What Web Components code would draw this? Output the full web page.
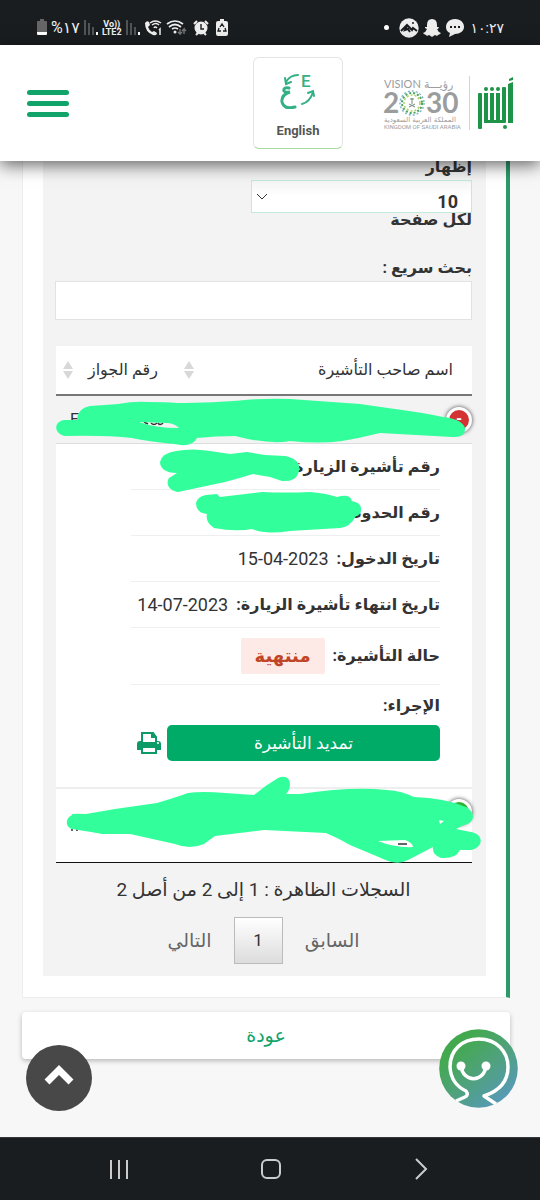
<!DOCTYPE html>
<html lang="ar" dir="rtl">
<head>
<meta charset="utf-8">
<meta name="viewport" content="width=device-width, initial-scale=1">
<title>أبشر</title>
<style>
  body {
    margin: 0;
    background: #f7f7f7;
    color: #333;
    font-family: Roboto, "DejaVu Sans", sans-serif;
    font-size: 18px;
  }
</style>
</head>
<body>
<absher-app>
  <status-bar slot="top"></status-bar>
  <site-header slot="top"></site-header>
  <content-card>
    <table-length></table-length>
    <quick-search></quick-search>
    <visa-table>
      <visa-field label="رقم تأشيرة الزيارة"></visa-field>
      <visa-field label="رقم الحدود"></visa-field>
      <visa-field label="تاريخ الدخول:">15-04-2023</visa-field>
      <visa-field label="تاريخ انتهاء تأشيرة الزيارة:">14-07-2023</visa-field>
      <visa-field label="حالة التأشيرة:" tall><status-badge>منتهية</status-badge></visa-field>
      <visa-actions></visa-actions>
    </visa-table>
    <table-pager>السجلات الظاهرة : 1 إلى 2 من أصل 2</table-pager>
  </content-card>
  <back-button>عودة</back-button>
  <floating-tools slot="floating"></floating-tools>
  <nav-bar slot="bottom"></nav-bar>
</absher-app>

<script>
class AbsherApp extends HTMLElement {
  constructor() {
    super();
    this.attachShadow({ mode: 'open' });
    this.shadowRoot.innerHTML = `
      <style>
        :host {
          display: flex;
          flex-direction: column;
          position: relative;
          min-height: 100vh;
        }
        main {
          flex: 1;
          padding: 0 30px 24px 22px;
        }
      </style>
      <slot name="top"></slot>
      <main><slot></slot></main>
      <slot name="floating"></slot>
      <slot name="bottom"></slot>
    `;
  }
}

class StatusBar extends HTMLElement {
  constructor() {
    super();
    this.attachShadow({ mode: 'open' });
    this.shadowRoot.innerHTML = `
      <style>
        :host {
          display: flex;
          direction: ltr;
          align-items: center;
          justify-content: space-between;
          box-sizing: border-box;
          height: 45px;
          padding: 10px 36px 0 37px;
          background: #1a1d20;
          color: #eee;
          font-size: 16px;
          line-height: 20px;
        }
        div {
          display: flex;
          align-items: center;
          gap: 4px;
        }
        .lte {
          font-size: 9px;
          line-height: 8px;
          font-weight: bold;
          text-align: center;
        }
        .time {
          margin-left: 2px;
          font-size: 14px;
        }
        svg { display: block; }
      </style>
      <div>
        <svg width="10" height="17" viewBox="0 0 10 17"><path fill="#666" d="M3 0h4v2h2q1 0 1 1v11H0V3q0-1 1-1h2z"/><path fill="#fff" d="M0 13h10v2q0 1-1 1H1q-1 0-1-1z"/></svg>
        <span>%١٧</span>
        <svg width="14" height="15" viewBox="0 0 14 15"><path stroke="#666" stroke-width="1.5" d="M1 0v15M5 3v12M9 7v8"/><path stroke="#fff" stroke-width="2" d="M13 12v3"/></svg>
        <span class="lte">Vo))<br>LTE2</span>
        <svg width="14" height="15" viewBox="0 0 14 15"><path stroke="#666" stroke-width="1.5" d="M1 0v15M5 3v12M9 7v8"/><path stroke="#fff" stroke-width="2" d="M13 12v3"/></svg>
        <svg width="18" height="16" viewBox="0 0 18 16" fill="none"><path fill="#eee" d="M1 3q2-3 4-1l1 3-2 2q1 3 4 5l2-1 3 2q0 3-4 2Q1 12 1 3z"/><path stroke="#eee" stroke-width="1.5" d="M6 3q5-4 11 0M8 5q4-3 7 0M10 8q1-2 3 0"/><path stroke="#eee" stroke-width="1.5" d="M15 10l1-1v6"/></svg>
        <svg width="21" height="15" viewBox="0 0 21 15" fill="none"><path stroke="#eee" stroke-width="1.7" d="M1 4q8-6 16 0M3 7q6-5 12 0M6 9q3-2 6 0"/><circle cx="9" cy="12" r="1.5" fill="#eee"/><path stroke="#777" stroke-width="1.4" d="M14 9v5l-2-2m2 2l2-2M18 14V9l-2 2m2-2l2 2"/></svg>
        <svg width="20" height="16" viewBox="-2 0 20 16"><circle cx="8" cy="8" r="6.5" fill="#eee"/><path stroke="#eee" stroke-width="2" d="M1 4l3-3M15 4l-3-3M3 15l2-2M13 15l-2-2"/><path fill="none" stroke="#1a1d20" stroke-width="1.4" d="M8 4v5h3"/></svg>
        <svg width="14" height="17" viewBox="2 0 14 17"><path fill="#eee" d="M7 0h4v2h2q2 0 2 2v11q0 2-2 2H5q-2 0-2-2V4q0-2 2-2h2z"/><path fill="none" stroke="#1a1d20" stroke-width="1.3" d="M7 8l2-3 2 3M12 9l1 3h-3M8 12H5l1-3"/></svg>
      </div>
      <div>
        <svg width="5" height="5" viewBox="0 0 5 5"><circle cx="2.500" cy="2.500" r="2.500" fill="#fff"/></svg>
        <svg width="26" height="20" viewBox="0 0 26 20"><circle cx="16" cy="10" r="9.700" fill="#eee"/><path fill="none" stroke="#1a1d20" stroke-width="2" d="M8 13l6-6 5 5 1-2 4 3M14 8l-2 4 3-1 2 3"/><circle cx="20" cy="5" r="1" fill="#1a1d20"/></svg>
        <svg width="18" height="18" viewBox="0 0 18 18"><path fill="#eee" d="M9 0q5 0 5 6v2l2 0-1 2-1 0q1 3 4 4l-1 1-2 1-1 1-2-1-3 2-3-2-2 1-1-1-2-1-1-1q3-1 4-4l-2-1 0-1 2 0V6q0-6 5-6z"/></svg>
        <svg width="20" height="18" viewBox="0 0 20 18"><path fill="#eee" d="M10 0c6 0 9 4 9 8s-4 7-9 7l-6 3 1-4C2 13 1 10 1 8c0-4 3-8 9-8z"/><path stroke="#1a1d20" stroke-width="2.200" stroke-dasharray="2 2" d="M5 8h10"/></svg>
        <span class="time">١٠:٢٧</span>
      </div>
    `;
  }
}

class SiteHeader extends HTMLElement {
  constructor() {
    super();
    this.attachShadow({ mode: 'open' });
    this.shadowRoot.innerHTML = `
      <style>
        :host {
          display: flex;
          align-items: center;
          position: relative;
          z-index: 2;
          box-sizing: border-box;
          height: 116px;
          padding: 0 26px 0 27px;
          background: #fff;
          box-shadow: 0 4px 16px rgba(0,0,0, 0.6);
        }
        button {
          border: 0;
          padding: 0;
          background: none;
          font: inherit;
          cursor: pointer;
        }
        svg { display: block; }
        .logo { padding-left: 8px; border-left: 1px solid #cfd8cf; }
        .vision { margin-right: 9px; overflow: visible; }
        .lang {
          display: flex;
          flex-direction: column;
          align-items: center;
          justify-content: space-between;
          box-sizing: border-box;
          width: 90px;
          height: 92px;
          margin-right: 41px;
          padding: 15px 0 9px;
          border: 1px solid #e4e4e4;
          border-bottom-color: #a8dba0;
          border-radius: 6px;
          color: #555;
          font-size: 13px;
          line-height: 16px;
          font-weight: bold;
        }
        .menu {
          display: flex;
          flex-direction: column;
          gap: 6px;
          width: 42px;
          margin-right: auto;
        }
        .menu i {
          height: 5px;
          border-radius: 3px;
          background: #10a36a;
        }
      </style>
      <svg class="logo" width="36" height="54" viewBox="478 76 36 54" role="img" aria-label="أبشر">
        <g fill="#1d9448">
          <rect x="478" y="93" width="4" height="36" rx="1"/>
          <rect x="484" y="93" width="4" height="29"/>
          <rect x="490" y="93" width="4" height="29"/>
          <rect x="496" y="93" width="4" height="29"/>
          <rect x="502" y="87" width="4" height="36" rx="1"/>
          <path d="M508 84l5-2v41h-5zM509 79l4-2v3l-4 1z"/>
          <path d="M484 120h20v3h-20z"/>
          <circle cx="486" cy="89" r="2"/><circle cx="492" cy="89" r="2"/><circle cx="498" cy="89" r="2"/><circle cx="505" cy="127" r="2"/>
        </g>
      </svg>
      <svg class="vision" width="76" height="54" viewBox="0 0 76 54" direction="ltr" fill="#9a9c9e">
        <text x="0" y="12" font-size="11" font-family="Lato, sans-serif">VISION</text>
        <text x="40" y="12" font-size="11" font-family="DejaVu Sans, sans-serif">رؤيـــة</text>
        <text x="-1" y="37" font-size="28" font-weight="bold" font-family="Lato, sans-serif">2</text>
        <text x="42" y="37" font-size="28" font-weight="bold" font-family="Lato, sans-serif">30</text>
        <g fill="none" stroke-dasharray="2 2">
          <circle cx="28" cy="27" r="12" stroke="#7db9c9" stroke-width="1.5"/>
          <circle cx="28" cy="27" r="10" stroke="#4ba35c" stroke-width="2"/>
          <circle cx="28" cy="27" r="8" stroke="#a9cf62" stroke-width="1.5"/>
        </g>
        <path fill="none" stroke="#6d8a76" d="M28 22v6M26 23h4M25 31l6-3M31 31l-6-3"/>
        <text x="0" y="46" font-size="7" font-family="DejaVu Sans, sans-serif">المملكة العربية السعودية</text>
        <text x="0" y="53" font-size="6" font-family="Roboto, sans-serif">KINGDOM OF SAUDI ARABIA</text>
      </svg>
      <button class="lang">
        <svg width="36" height="36" viewBox="0 0 36 36" fill="none" stroke="#35b085" stroke-width="2" stroke-linecap="round">
          <path d="M18 2Q10 2 6 9M5 5l1 6 5-2"/>
          <path stroke-width="3" d="M9 15Q3 14 4 18q1 2 6 1Q1 22 2 29q2 8 13 5"/>
          <path d="M22 31q8-2 11-12M28 20l5-2 1 5"/>
          <text x="21" y="14" font-size="17" font-weight="500" fill="#35b085" stroke="none" direction="ltr" font-family="Roboto, sans-serif">E</text>
        </svg>
        English
      </button>
      <button class="menu" aria-label="القائمة"><i></i><i></i><i></i></button>
    `;
  }
}

class ContentCard extends HTMLElement {
  constructor() {
    super();
    this.attachShadow({ mode: 'open' });
    this.shadowRoot.innerHTML = `
      <style>
        :host {
          display: block;
          margin-top: -8px;
          padding: 0 20px 21px 20px;
          border: 1px solid #ededed;
          border-right: 4px solid #2a9a68;
          background: #fff;
        }
        section {
          padding: 0 14px 12px 12px;
          background: #f3f3f3;
        }
      </style>
      <section><slot></slot></section>
    `;
  }
}

class TableLength extends HTMLElement {
  constructor() {
    super();
    this.attachShadow({ mode: 'open' });
    this.shadowRoot.innerHTML = `
      <style>
        :host {
          display: block;
          font-weight: bold;
        }
        label {
          display: flex;
          flex-direction: column;
          align-items: flex-start;
          font-size: 16px;
          line-height: 14px;
        }
        .top { line-height: 26px; }
        .select {
          display: grid;
          align-items: center;
          width: 53%;
        }
        select, svg { grid-area: 1 / 1; }
        select {
          appearance: none;
          box-sizing: border-box;
          width: 100%;
          height: 33px;
          padding: 10px 13px 0;
          border: 1px solid #c4eadb;
          border-radius: 0;
          background: linear-gradient(#f5f5f5, #fff 50%);
          color: #333;
          font: inherit;
          font-size: 18px;
          line-height: 22px;
        }
        svg { justify-self: end; margin-left: 5px; }
      </style>
      <label>
        <span class="top">إظهار</span>
        <span class="select">
          <select><option>10</option><option>25</option><option>50</option></select>
          <svg width="12" height="8" viewBox="0 0 12 8" fill="none" stroke="#333"><path d="M1 1l5 5 5-5"/></svg>
        </span>
        <span>لكل صفحة</span>
      </label>
    `;
  }
}

class QuickSearch extends HTMLElement {
  constructor() {
    super();
    this.attachShadow({ mode: 'open' });
    this.shadowRoot.innerHTML = `
      <style>
        :host {
          display: block;
          margin: 28px 0 26px;
        }
        label {
          display: block;
          font-size: 16px;
          line-height: 26px;
          font-weight: bold;
        }
        input {
          display: block;
          box-sizing: border-box;
          width: 100%;
          height: 39px;
          padding: 0 8px;
          border: 1px solid #e2e2e2;
          border-radius: 0;
          background: #fff;
          font: inherit;
        }
      </style>
      <label for="q">بحث سريع :</label>
      <input id="q" type="search">
    `;
  }
}

class VisaTable extends HTMLElement {
  constructor() {
    super();
    this.attachShadow({ mode: 'open' });
    this.shadowRoot.innerHTML = `
      <style>
        :host {
          display: block;
          position: relative;
          margin-left: 1px;
        }
        table {
          width: 100%;
          border-collapse: separate;
          border-spacing: 0;
          border-bottom: 1px solid #111;
          background: #fff;
          table-layout: fixed;
        }
        th, td { padding: 0; }
        th {
          height: 48px;
          border-bottom: 2px solid #777;
          font-size: 16px;
          line-height: 24px;
          font-weight: 500;
          text-align: start;
        }
        th div {
          display: flex;
          align-items: center;
          justify-content: space-between;
          padding: 0 19px 0 7px;
        }
        .passport { width: 121px; }
        .row td {
          height: 47px;
          border-bottom: 1px solid #ddd;
          background: #f3f3f3;
        }
        .row .number {
          padding-left: 14px;
          direction: ltr;
          text-align: left;
          line-height: 22px;
          font-size: 16px;
        }
        .last td {
          height: 73px;
          padding-top: 10px;
          box-sizing: border-box;
          vertical-align: top;
        }
        .details td { border-bottom: 2px solid #eee; }
        dl {
          margin: 0;
          padding: 0 32px 26px 75px;
        }
        .toggle {
          display: block;
          width: 26px;
          height: 26px;
          padding: 0;
          border: 3px solid #fff;
          border-radius: 50%;
          box-shadow: 0 0 4px #444;
          background: #d33333;
          color: #fff;
          font: bold 15px/18px "Liberation Mono", monospace;
        }
        .last .toggle { background: #31b131; color: #31b131; }
        .ink {
          display: block;
          position: absolute;
          top: 0;
          left: 0;
          width: 100%;
          overflow: visible;
          pointer-events: none;
        }
      </style>
      <table>
        <thead>
          <tr>
            <th><div>اسم صاحب التأشيرة ${VisaTable.sortIcon}</div></th>
            <th class="passport"><div>رقم الجواز ${VisaTable.sortIcon}</div></th>
          </tr>
        </thead>
        <tbody>
          <tr class="row"><td><button class="toggle">-</button></td><td class="number">E</td></tr>
          <tr class="details"><td colspan="2"><dl><slot></slot></dl></td></tr>
          <tr class="last"><td><button class="toggle" aria-label="عرض التفاصيل"></button></td><td></td></tr>
        </tbody>
      </table>
      <svg class="ink" viewBox="56 345 416 518">
        <path fill="none" stroke="#333" stroke-width="1.5" d="M144 421l4 2M151 422q3 3 6 0M158 422q2 3 5 0M71 829h2M76 829h2M84 829h6M398 843h9"/>
        <g fill="#32ff9b">
          <path d="M64 419h13Q78 407 90 405 105 404 118 403 135 400 148 401 165 401 177 402C200 402 225 401 245 399Q270 397 290 398L360 403 395 408Q425 412 443 416 462 418 465 427 466 437 452 436L380 432Q360 437 342 440 320 443 290 440 270 444 235 435 215 435 197 437 192 447 174 443 145 440 132 437 105 434 65 435C54 433 53 421 64 419z M139 421Q155 427 179 427 174 422 166 422z" fill-rule="evenodd"/>
          <path d="M176 450Q192 447 210 450L230 453 247 451 265 454 285 455C296 457 302 463 298 473Q295 481 282 480L270 476 253 473Q240 477 225 481L178 491C170 490 165 484 169 477L177 472C165 472 160 467 160 461Q162 452 176 450z"/>
          <path d="M206 494L217 493 220 496 262 491Q285 492 310 491 325 492 337 496 350 492 352 500 362 502 361 509 361 514 356 515 350 526 340 527L290 530Q265 534 252 528 235 531 214 527 205 521 207 513 196 512 196 502 198 495 206 494z"/>
          <path d="M72 814Q70 812 86 813L115 808 157 802Q177 796 188 792 202 790 225 792L254 794Q266 784 278 777 289 773 290 783 290 789 286 793L300 793Q352 785 387 789 402 790 414 796 445 797 466 806C477 812 474 823 464 824L456 828 471 831C486 834 482 848 470 849L460 849Q456 858 441 857 432 854 433 846L408 859Q399 864 388 860L350 844Q338 837 326 832L264 829 215 835 204 843Q190 849 175 843L130 833 112 833 102 833 91 831 72 828C65 826 65 817 72 814z M378 840Q395 847 413 846 413 842 405 839z M439 819l1 4 4-3z" fill-rule="evenodd"/>
        </g>
      </svg>
    `;
  }

  static get sortIcon() {
    return '<svg width="10" height="20" viewBox="0 0 10 20" fill="#d8d8d8"><path d="M0 9l5-8 5 8zM0 11l5 8 5-8z"/></svg>';
  }
}

class VisaField extends HTMLElement {
  constructor() {
    super();
    this.attachShadow({ mode: 'open' });
    this.shadowRoot.innerHTML = `
      <style>
        :host {
          display: flex;
          align-items: center;
          gap: 8px;
          height: 45px;
          border-bottom: 1px solid #eef0f0;
          line-height: 26px;
          white-space: nowrap;
        }
        :host([tall]) { height: 56px; }
        dt {
          font-size: 16px;
          font-weight: bold;
        }
        dd { margin: 0; }
      </style>
      <dt></dt>
      <dd><slot></slot></dd>
    `;
    this.shadowRoot.querySelector('dt').textContent = this.getAttribute('label');
  }
}

class StatusBadge extends HTMLElement {
  constructor() {
    super();
    this.attachShadow({ mode: 'open' });
    this.shadowRoot.innerHTML = `
      <style>
        :host {
          display: block;
          padding: 5px 14px;
          border-radius: 2px;
          background: #fdeae7;
          color: #bf4526;
          font-size: 18px;
          font-weight: bold;
        }
      </style>
      <slot></slot>
    `;
  }
}

class VisaActions extends HTMLElement {
  constructor() {
    super();
    this.attachShadow({ mode: 'open' });
    this.shadowRoot.innerHTML = `
      <style>
        :host {
          display: block;
          padding-top: 8px;
        }
        dt {
          font-size: 16px;
          line-height: 26px;
          font-weight: bold;
        }
        dd {
          display: flex;
          align-items: center;
          gap: 6px;
          margin: 6px 0 0;
        }
        button {
          padding: 0;
          border: 0;
          background: none;
          font: inherit;
          cursor: pointer;
        }
        .extend {
          flex: 1;
          height: 36px;
          border-radius: 5px;
          background: #00ab67;
          color: #fff;
          font-size: 17px;
          line-height: 26px;
        }
        svg { display: block; margin-left: 6px; }
      </style>
      <dt>الإجراء:</dt>
      <dd>
        <button class="extend">تمديد التأشيرة</button>
        <button aria-label="طباعة">
          <svg width="24" height="24" viewBox="0 0 24 24">
            <path fill="#0c9a66" d="M0 13q0-3 3-3h18q3 0 3 3v6h-4v-3H4v3H0z"/>
            <path fill="#fff" stroke="#0c9a66" stroke-width="2" d="M5 11V2h11l3 4v5M5 16h14v6H5z"/>
            <path fill="#0c9a66" d="M14 1l6 5-1 1h-5z"/>
            <circle cx="21" cy="12" r="1" fill="#fff"/>
          </svg>
        </button>
      </dd>
    `;
  }
}

class TablePager extends HTMLElement {
  constructor() {
    super();
    this.attachShadow({ mode: 'open' });
    this.shadowRoot.innerHTML = `
      <style>
        :host {
          display: block;
          text-align: center;
        }
        p {
          margin: 0;
          padding: 13px 0 14px;
          font-size: 19px;
          line-height: 27px;
        }
        nav {
          display: flex;
          align-items: center;
          justify-content: center;
        }
        button {
          height: 47px;
          padding: 0 22px;
          border: 0;
          background: none;
          color: #666;
          font: inherit;
          font-size: 19px;
          line-height: 27px;
        }
        .current {
          width: 49px;
          padding: 0;
          border: 1px solid #bbb;
          background: linear-gradient(#fff, #dcdcdc);
          color: #333;
          font-size: 17px;
        }
      </style>
      <p><slot></slot></p>
      <nav>
        <button>السابق</button>
        <button class="current">1</button>
        <button>التالي</button>
      </nav>
    `;
  }
}

class BackButton extends HTMLElement {
  constructor() {
    super();
    this.attachShadow({ mode: 'open' });
    this.shadowRoot.innerHTML = `
      <style>
        :host {
          display: block;
          margin-top: 14px;
        }
        button {
          display: block;
          width: 100%;
          height: 47px;
          border: 0;
          border-radius: 4px;
          background: #fff;
          box-shadow: 0 2px 5px rgba(0,0,0, 0.25);
          color: #10a36a;
          font: inherit;
          font-size: 19px;
          line-height: 27px;
        }
      </style>
      <button><slot></slot></button>
    `;
  }
}

class FloatingTools extends HTMLElement {
  constructor() {
    super();
    this.attachShadow({ mode: 'open' });
    this.shadowRoot.innerHTML = `
      <style>
        :host {
          display: flex;
          align-items: center;
          justify-content: space-between;
          position: absolute;
          right: 22px;
          bottom: 88px;
          left: 26px;
          height: 88px;
          pointer-events: none;
        }
        button {
          padding: 0;
          border: 0;
          border-radius: 50%;
          background: none;
          pointer-events: all;
        }
        .top { margin-top: 20px; }
        svg { display: block; }
      </style>
      <button class="chat" aria-label="المساعد">
        <svg width="79" height="79" viewBox="0 0 79 79" fill="none">
          <defs>
            <linearGradient id="g" x1="0.2" y1="0.1" x2="0.9" y2="0.9">
              <stop offset="0.1" stop-color="#43a94f"/><stop offset="0.5" stop-color="#4fa27b"/><stop offset="1" stop-color="#5799bd"/>
            </linearGradient>
          </defs>
          <circle cx="39.500" cy="39.500" r="39.300" fill="url(#g)"/>
          <path stroke="#fff" stroke-width="3.500" stroke-linejoin="round" d="M17 72l9-4q4-2 1-6Q12 55 11 38C11 21 23 10 40 10s29 12 29 28c0 14-9 24-24 29l12 8"/>
          <path stroke="#fff" stroke-width="3.500" d="M22 37c2 17 23 17 25 0"/>
          <circle cx="22" cy="37" r="4.500" fill="#fff"/><circle cx="47" cy="37" r="4.500" fill="#fff"/>
        </svg>
      </button>
      <button class="top" aria-label="إلى الأعلى">
        <svg width="66" height="66" viewBox="0 0 66 66">
          <circle cx="33" cy="33" r="33" fill="#484848"/>
          <path fill="none" stroke="#fff" stroke-width="7" d="M21 37l12-12 12 12"/>
        </svg>
      </button>
    `;
  }
}

class NavBar extends HTMLElement {
  constructor() {
    super();
    this.attachShadow({ mode: 'open' });
    this.shadowRoot.innerHTML = `
      <style>
        :host {
          display: flex;
          align-items: center;
          justify-content: space-between;
          direction: ltr;
          box-sizing: border-box;
          height: 63px;
          padding: 0 111px 0 107px;
          border-top: 1px solid #34383b;
          background: #1a1d20;
        }
        button {
          padding: 0;
          border: 0;
          background: none;
        }
        svg { display: block; }
      </style>
      <button aria-label="التطبيقات الأخيرة"><svg width="24" height="22" viewBox="0 0 24 22" stroke="#ccc" stroke-width="2"><path d="M4 2v19M12 2v19M20 2v19"/></svg></button>
      <button aria-label="الرئيسية"><svg width="22" height="22" viewBox="0 0 22 22" fill="none" stroke="#ccc" stroke-width="2"><rect x="2" y="2" width="18" height="18" rx="5"/></svg></button>
      <button aria-label="رجوع"><svg width="18" height="22" viewBox="0 0 18 22" fill="none" stroke="#ccc" stroke-width="2"><path d="M5 1l10 10L5 21"/></svg></button>
    `;
  }
}

customElements.define('absher-app', AbsherApp);
customElements.define('status-bar', StatusBar);
customElements.define('site-header', SiteHeader);
customElements.define('content-card', ContentCard);
customElements.define('table-length', TableLength);
customElements.define('quick-search', QuickSearch);
customElements.define('visa-table', VisaTable);
customElements.define('visa-field', VisaField);
customElements.define('status-badge', StatusBadge);
customElements.define('visa-actions', VisaActions);
customElements.define('table-pager', TablePager);
customElements.define('back-button', BackButton);
customElements.define('floating-tools', FloatingTools);
customElements.define('nav-bar', NavBar);
</script>
</body>
</html>
